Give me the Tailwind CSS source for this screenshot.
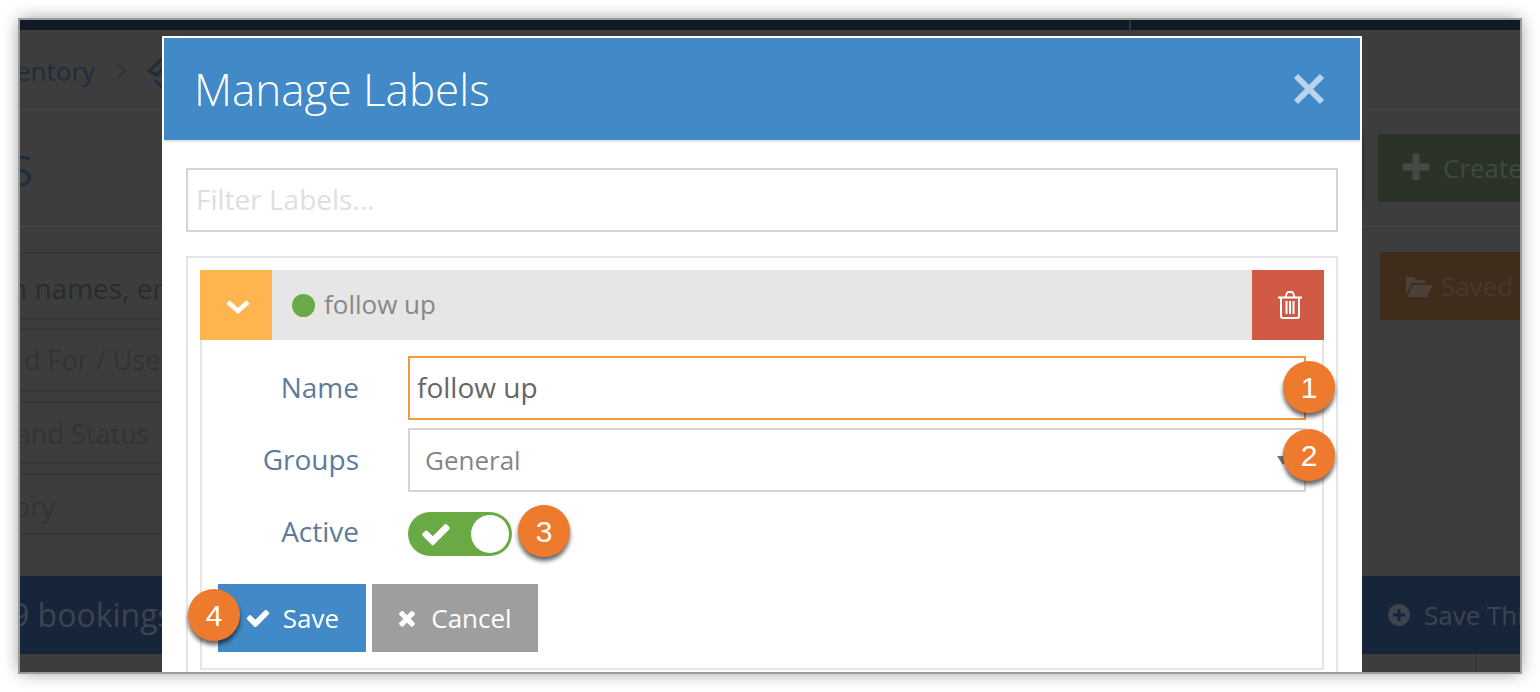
<!DOCTYPE html>
<html>
<head>
<meta charset="utf-8">
<script src="https://cdn.jsdelivr.net/npm/@tailwindcss/browser@4"></script>
</head>
<body class="bg-white font-['Open_Sans',sans-serif]">
<div class="w-[1540px] h-[692px] overflow-hidden bg-white p-5">
  <div class="relative w-[1500px] h-[652px] overflow-hidden bg-[#3d3d3d] outline-2 outline-[#9a9a9a] shadow-[0_0_16px_rgba(0,0,0,0.45)] flex flex-col text-[#1f2a38]">
    <!-- dimmed page -->
    <div class="h-[10px] shrink-0 bg-[#0f1a24] flex justify-end">
      <div class="w-[391px] border-l-2 border-[#333]"></div>
    </div>
    <div class="h-[80px] shrink-0 flex items-center border-b border-dotted border-[#4a4a4a] text-[26px] text-[#1e2c3d] pt-[4px]">
      <span class="ml-[-4px]">entory</span>
      <svg class="ml-[22px] w-[10px] h-[16px] mt-[-2px]" viewBox="0 0 10 16" fill="none" stroke="#333" stroke-width="2.500"><path d="M1 1l7 7-7 7"/></svg>
      <svg class="ml-[20px] w-[26px] h-[36px] mt-[-2px]" viewBox="0 0 26 36" fill="none" stroke="#1e2c3d" stroke-width="3"><path d="M2 18L18 3l6 4L10 22zM8 27l7 7"/></svg>
    </div>
    <div class="h-[117px] shrink-0 flex justify-between border-b border-dotted border-[#4f4f4f]">
      <span class="text-[42px] text-[#1e2c3d] ml-[-10px] mt-[39px] leading-none">S</span>
      <div class="flex gap-[14px] mt-[24px]">
        <div class="w-[2px] h-[68px] bg-[#333]"></div>
        <div class="w-[142px] h-[68px] bg-[#2a3325] flex items-center gap-[10px] pl-[21px] text-[26px] text-[#3e4a3f] overflow-hidden whitespace-nowrap">
          <svg class="w-[34px] h-[34px] shrink-0" viewBox="0 0 1792 1792" fill="#454a45"><path d="M1600 736v192q0 40-28 68t-68 28h-416v416q0 40-28 68t-68 28h-192q-40 0-68-28t-28-68v-416h-416q-40 0-68-28t-28-68v-192q0-40 28-68t68-28h416v-416q0-40 28-68t68-28h192q40 0 68 28t28 68v416h416q40 0 68 28t28 68z"/></svg>
          <span>Create</span>
        </div>
      </div>
    </div>
    <div class="h-[93px] shrink-0 flex justify-between pt-[25px]">
      <div class="w-[160px] h-[68px] border-y-2 border-[#363636] flex items-center pt-[3px] text-[28px] text-[#242e2a] whitespace-nowrap overflow-hidden"><span class="ml-[-10px]">n names, en</span></div>
      <div class="w-[140px] h-[68px] bg-[#3f2c1a] flex items-center gap-[8px] pl-[25px] text-[26px] text-[#453a2e]">
        <svg class="w-[28px] h-[24px] shrink-0" viewBox="0 0 28 24" fill="#4a4236"><path d="M1 21V3h8l2 3h9v3H7zM2 23L8 11h20l-6 12z"/></svg>
        <span>Saved</span>
      </div>
    </div>
    <div class="h-[64px] shrink-0 w-[160px] mt-[8px] border-b-2 border-t-2 border-[#363636] flex items-center pt-[1px] text-[27px] text-[#333] whitespace-nowrap overflow-hidden"><span class="ml-[4px]">d For / Use</span></div>
    <div class="h-[63px] shrink-0 w-[160px] mt-[9px] border-y-2 border-[#363636] flex items-center pt-[3px] text-[27px] text-[#333] whitespace-nowrap overflow-hidden"><span class="ml-[-4px]">and Status</span></div>
    <div class="h-[62px] shrink-0 w-[160px] mt-[9px] border-y-2 border-[#363636] flex items-center pt-[6px] text-[27px] text-[#333]"><span class="ml-[-6px]">ory</span></div>
    <div class="h-[78px] shrink-0 mt-[41px] bg-[#17253a] flex items-center justify-between text-[#3d444d]">
      <span class="text-[32px] ml-[-9px]">9 bookings</span>
      <div class="flex items-center gap-[14px] text-[26px] w-[132px] shrink-0 whitespace-nowrap overflow-hidden">
        <svg class="w-[22px] h-[22px] shrink-0" viewBox="0 0 22 22"><circle cx="11" cy="11" r="11" fill="#3d444d"/><path d="M11 5v12M5 11h12" stroke="#17253a" stroke-width="3"/></svg>
        <span>Save Thi</span>
      </div>
    </div>
    <div class="flex-1 flex justify-end"><div class="w-[45px] border-l border-[#333]"></div></div>

    <!-- modal -->
    <div class="absolute left-[142px] top-[16px] w-[1200px] h-[636px] border-2 border-b-0 border-white bg-white overflow-hidden">
      <div class="h-[104px] bg-[#4189c7] border-b-2 border-[#e5e5e5] flex items-center justify-between pl-[30px] pr-[35px]">
        <h1 class="text-[44px] font-light text-white leading-none">Manage Labels</h1>
        <svg class="w-[32px] h-[32px]" viewBox="0 0 32 32" stroke="#b9d4ec" stroke-width="6"><path d="M3 3l26 26M29 3L3 29"/></svg>
      </div>
      <div class="px-[22px] pt-[26px]">
        <div class="h-[64px] border-2 border-[#d5d5d5] flex items-center pl-[8px] pb-[2px] text-[28px] text-[#e0dee0]">Filter Labels...</div>
        <div class="mt-[24px] border-2 border-[#e5e5e5] px-[12px] pt-[12px] h-[500px]">
          <div class="h-[70px] bg-[#e6e6e6] flex items-center">
            <div class="w-[72px] h-full bg-[#ffb54f] flex items-center justify-center pl-[4px]">
              <svg class="w-[24px] h-[16px] mt-[4px]" viewBox="0 0 24 16" fill="none" stroke="white" stroke-width="4.500"><path d="M2 3l10 9 10-9"/></svg>
            </div>
            <span class="w-[23px] h-[23px] rounded-full bg-[#6aaa45] ml-[20px]"></span>
            <span class="ml-[9px] pb-[2px] text-[26px] text-[#888]">follow up</span>
            <div class="ml-auto w-[72px] h-full bg-[#d05a46] flex items-center justify-center pl-[4px]">
              <svg class="w-[26px] h-[28px]" viewBox="0 0 26 28" fill="none" stroke="white" stroke-width="2"><path d="M1 6.500h24M4 7v18q0 2 2 2h14q2 0 2-2V7M8.500 6l1-3q.5-2 2-2h3q1.500 0 2 2l1 3M9.500 10v13M13 10v13M16.500 10v13"/></svg>
            </div>
          </div>
          <div class="relative h-[330px] border-2 border-t-0 border-[#e5e5e5] pt-[16px] pl-[16px] pr-[16px]">
            <div class="grid grid-cols-[157px_1fr] gap-x-[49px] gap-y-[8px] items-center text-[28px] text-[#5d7b9c] ml-[-16px]">
              <label class="text-right pb-[2px]">Name</label>
              <div class="h-[64px] border-2 border-[#f59942] flex items-center pl-[7px] pb-[2px] text-[#666]">follow up</div>
              <label class="text-right pb-[2px]">Groups</label>
              <div class="relative h-[64px] border-2 border-[#d5d5d5] flex items-center pl-[15px] pt-[1px] text-[26px] text-[#858585]">General
                <span class="absolute left-[867px] top-[26px] w-0 h-0 border-x-[6px] border-x-transparent border-t-[9px] border-t-[#777]"></span>
              </div>
              <label class="text-right mt-[5px]">Active</label>
              <div class="flex mt-[12px] h-[44px] items-center">
                <div class="w-[104px] h-[44px] rounded-full bg-[#6aaa45] flex items-center justify-between pl-[12px] pr-[3px]">
                  <svg class="w-[32px] h-[32px]" viewBox="0 0 1792 1792" fill="white"><path d="M1671 566q0 40-28 68l-724 724-136 136q-28 28-68 28t-68-28l-136-136-362-362q-28-28-28-68t28-68l136-136q28-28 68-28t68 28l294 295 656-657q28-28 68-28t68 28l136 136q28 28 28 68z"/></svg>
                  <span class="w-[38px] h-[38px] rounded-full bg-white"></span>
                </div>
              </div>
            </div>
            <div class="flex gap-[6px] mt-[28px] text-[26px] text-white">
              <button class="w-[148px] h-[68px] bg-[#4189c7] flex items-center justify-center gap-[12px]">
                <svg class="w-[26px] h-[26px]" viewBox="0 0 1792 1792" fill="white"><path d="M1671 566q0 40-28 68l-724 724-136 136q-28 28-68 28t-68-28l-136-136-362-362q-28-28-28-68t28-68l136-136q28-28 68-28t68 28l294 295 656-657q28-28 68-28t68 28l136 136q28 28 28 68z"/></svg>
                Save
              </button>
              <button class="w-[166px] h-[68px] bg-[#9e9e9e] flex items-center justify-center gap-[12px] pr-[3px]">
                <svg class="w-[24px] h-[24px]" viewBox="0 0 1408 1792" fill="white"><path d="M1298 1322q0 40-28 68l-136 136q-28 28-68 28t-68-28l-294-294-294 294q-28 28-68 28t-68-28l-136-136q-28-28-28-68t28-68l294-294-294-294q-28-28-28-68t28-68l136-136q28-28 68-28t68 28l294 294 294-294q28-28 68-28t68 28l136 136q28 28 28 68t-28 68l-294 294 294 294q28 28 28 68z"/></svg>
                Cancel
              </button>
            </div>
          </div>
        </div>
      </div>
    </div>

    <!-- numbered callouts -->
    <span class="absolute left-[1263px] top-[341px] w-[52px] h-[52px] rounded-full bg-[#ee7a2e] shadow-[0_4px_4px_rgba(0,0,0,0.6)] flex items-center justify-center text-white text-[30px] font-['Liberation_Sans',sans-serif]">1</span>
    <span class="absolute left-[1263px] top-[409px] w-[52px] h-[52px] rounded-full bg-[#ee7a2e] shadow-[0_4px_4px_rgba(0,0,0,0.6)] flex items-center justify-center text-white text-[30px] font-['Liberation_Sans',sans-serif]">2</span>
    <span class="absolute left-[498px] top-[485px] w-[52px] h-[52px] rounded-full bg-[#ee7a2e] shadow-[0_4px_4px_rgba(0,0,0,0.6)] flex items-center justify-center text-white text-[30px] font-['Liberation_Sans',sans-serif]">3</span>
    <span class="absolute left-[168px] top-[569px] w-[52px] h-[52px] rounded-full bg-[#ee7a2e] shadow-[0_4px_4px_rgba(0,0,0,0.6)] flex items-center justify-center text-white text-[30px] font-['Liberation_Sans',sans-serif]">4</span>
  </div>
</div>
</body>
</html>
